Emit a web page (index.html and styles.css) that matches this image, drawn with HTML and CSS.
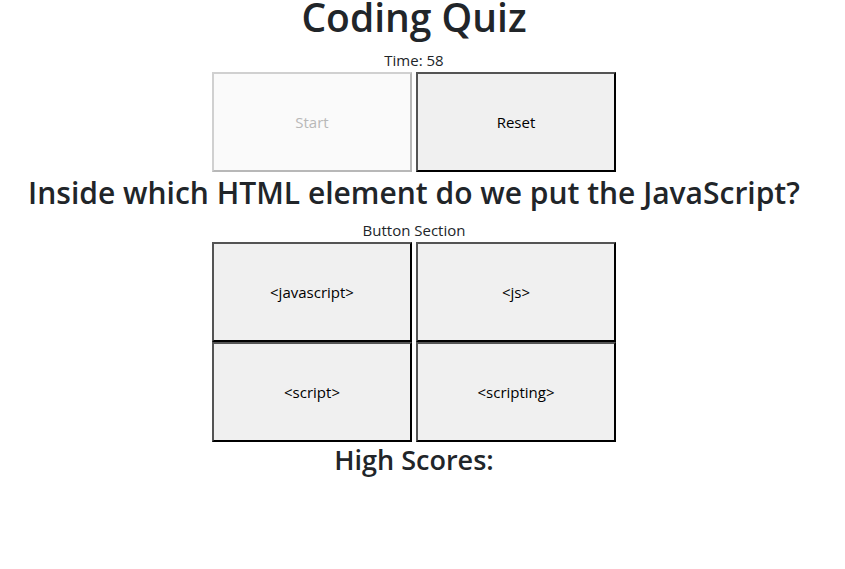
FILE: index.html
```html
<!DOCTYPE html>
<html lang="en">
<head>
<meta charset="utf-8">
<meta name="viewport" content="width=device-width, initial-scale=1">
<title>Coding Quiz</title>
<link rel="stylesheet" href="styles.css">
</head>
<body>
<main class="quiz">
  <h1>Coding Quiz</h1>
  <div>Time: 58</div>
  <div class="buttons">
    <button type="button" disabled>Start</button>
    <button type="button">Reset</button>
  </div>
  <h2>Inside which HTML element do we put the JavaScript?</h2>
  <div>Button Section</div>
  <div class="buttons">
    <button type="button">&lt;javascript&gt;</button>
    <button type="button">&lt;js&gt;</button>
    <button type="button">&lt;script&gt;</button>
    <button type="button">&lt;scripting&gt;</button>
  </div>
  <h3>High Scores:</h3>
</main>
</body>
</html>
```
FILE: styles.css
```css
* {
  box-sizing: border-box;
}

body {
  margin: 0;
  background: #fff;
  color: #212529;
  font-family: "Segoe UI", "Open Sans", "Noto Sans", sans-serif;
  font-size: 15px;
  line-height: 24px;
}

.quiz {
  padding: 0 17px 0 0;
  text-align: center;
}

h1,
h2,
h3 {
  margin: 0;
  font-weight: 600;
}

h1 {
  margin-bottom: 14px;
  font-size: 39px;
  line-height: 34px;
}

h2 {
  margin-bottom: 4px;
  font-size: 30px;
  line-height: 42px;
}

h3 {
  font-size: 27px;
  line-height: 36px;
}

.buttons {
  display: grid;
  grid-template-columns: repeat(2, 200px);
  justify-content: center;
  column-gap: 4px;
}

button {
  height: 100px;
  padding: 0;
  border: 2px outset #000;
  border-radius: 0;
  background: #f0f0f0;
  color: #000;
  font: inherit;
}

button:disabled {
  border-color: #d0d0d0 #b8b8b8 #b8b8b8 #d0d0d0;
  border-style: solid;
  background: #fafafa;
  color: #b8b8b8;
}
```
